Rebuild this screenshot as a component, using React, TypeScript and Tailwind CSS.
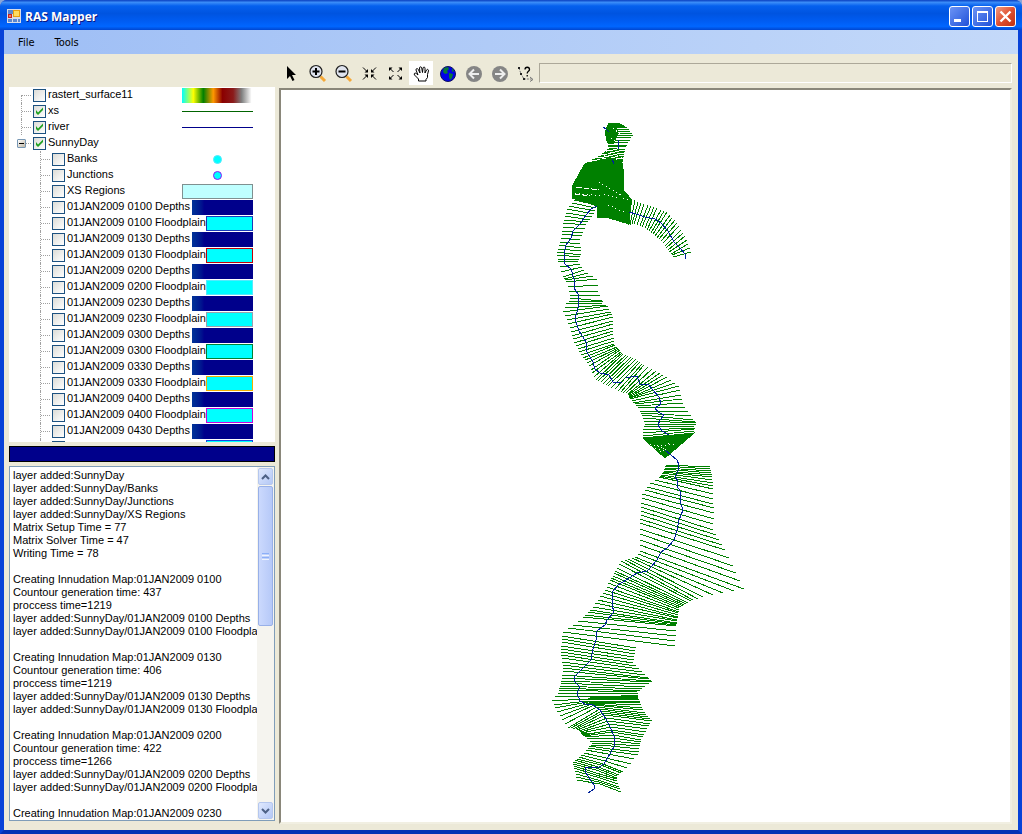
import React from "react";

type Layer = { name: string; kind: "line" | "dot" | "area" | "depth" | "flood"; style: string };

const floodBorders = [
  "border-blue-800",
  "border-red-700",
  "border-cyan-300",
  "border-gray-400",
  "border-green-700",
  "border-yellow-500",
  "border-fuchsia-600",
  "border-blue-700",
];
const times = ["0100", "0130", "0200", "0230", "0300", "0330", "0400", "0430"];

const sunnyDay: Layer[] = [
  { name: "Banks", kind: "dot", style: "border-cyan-300" },
  { name: "Junctions", kind: "dot", style: "border-purple-600" },
  { name: "XS Regions", kind: "area", style: "" },
];
times.forEach((t, i) => {
  sunnyDay.push({ name: `01JAN2009 ${t} Depths`, kind: "depth", style: "" });
  sunnyDay.push({ name: `01JAN2009 ${t} Floodplain`, kind: "flood", style: floodBorders[i] });
});

const runs = [
  ["0100", "437", "1219"],
  ["0130", "406", "1219"],
  ["0200", "422", "1266"],
];

const log = [
  "layer added:SunnyDay",
  "layer added:SunnyDay/Banks",
  "layer added:SunnyDay/Junctions",
  "layer added:SunnyDay/XS Regions",
  "Matrix Setup Time = 77",
  "Matrix Solver Time = 47",
  "Writing Time = 78",
  "",
  ...runs.flatMap(([t, gen, total]) => [
    `Creating Innudation Map:01JAN2009 ${t}`,
    `Countour generation time: ${gen}`,
    `proccess time=${total}`,
    `layer added:SunnyDay/01JAN2009 ${t} Depths`,
    `layer added:SunnyDay/01JAN2009 ${t} Floodplain`,
    "",
  ]),
  "Creating Innudation Map:01JAN2009 0230",
].join("\n");

// each row: number of cuts up to this one, then the x/y points of the cut
type Cut = number[];

const head: Cut[] = [
  [0, 609, 123, 620, 123],
  [4, 606, 128, 627, 127],
  [4, 605, 136, 633, 135],
  [3, 607, 143, 628, 142],
  [3, 609, 148, 625, 150],
  [6, 598, 156, 623, 160],
  [5, 584, 164, 622, 166],
];

const leftArm: Cut[] = [
  [0, 574, 200, 597, 205],
  [3, 567, 209, 594, 214],
  [4, 563, 223, 586, 225],
  [4, 561, 238, 580, 240],
  [4, 557, 252, 581, 255],
  [3, 558, 262, 578, 261],
  [3, 563, 277, 584, 270],
  [3, 566, 282, 597, 279],
  [2, 569, 291, 598, 291],
  [2, 570, 298, 602, 301],
  [2, 566, 304, 603, 303],
  [2, 563, 312, 608, 306],
  [4, 570, 328, 613, 317],
  [4, 574, 343, 613, 331],
  [4, 581, 355, 614, 344],
  [3, 587, 363, 618, 348],
  [5, 596, 380, 623, 354],
  [5, 608, 386, 636, 359],
  [4, 621, 392, 644, 365],
  [3, 628, 394, 656, 371],
  [3, 629, 397, 667, 377],
  [3, 630, 399, 679, 386],
  [4, 636, 406, 683, 403],
  [4, 642, 415, 693, 420],
  [2, 644, 421, 696, 423],
  [5, 643, 436, 694, 431],
];

const rightArm: Cut[] = [
  [0, 632, 199, 628, 225],
  [3, 641, 203, 634, 224],
  [4, 654, 207, 645, 228],
  [4, 667, 212, 653, 234],
  [4, 677, 223, 661, 241],
  [4, 685, 236, 668, 250],
  [4, 691, 252, 673, 257],
];

const lower: Cut[] = [
  [0, 666, 465, 710, 467],
  [5, 663, 472, 712, 477],
  [4, 659, 477, 713, 489],
  [2, 650, 483, 713, 499],
  [3, 642, 494, 714, 513],
  [3, 641, 507, 713, 530],
  [4, 640, 523, 725, 550],
  [5, 640, 551, 744, 589],
  [2, 635, 557, 723, 593],
  [2, 628, 559, 703, 597],
  [2, 621, 561, 693, 600],
  [3, 615, 571, 686, 604],
  [4, 610, 580, 679, 608],
  [4, 603, 593, 678, 615],
  [5, 590, 610, 677, 623],
  [3, 583, 617, 676, 626],
  [4, 563, 632, 675, 646],
  [1, 562, 636, 636, 648],
  [5, 561, 652, 633, 663],
  [5, 563, 668, 648, 678],
  [3, 562, 678, 652, 682],
  [3, 560, 686, 642, 689],
  [2, 558, 690, 637, 692],
  [2, 555, 696, 638, 696],
];

// cuts that bend where they meet the river
const bent: Cut[] = [
  [0, 552, 701, 585, 699, 639, 699],
  [2, 555, 708, 588, 702, 640, 703],
  [3, 562, 720, 594, 705, 643, 710],
  [2, 568, 728, 600, 709, 646, 715],
  [3, 576, 729, 605, 715, 652, 721],
  [3, 580, 732, 610, 724, 647, 729],
  [4, 585, 737, 613, 735, 641, 740],
  [3, 592, 743, 612, 744, 640, 746],
  [3, 588, 748, 609, 751, 638, 755],
  [4, 579, 757, 603, 764, 623, 772],
  [3, 573, 762, 596, 768, 617, 776],
  [3, 574, 768, 596, 775, 617, 781],
  [4, 577, 780, 600, 784, 621, 792],
];

function cutsPath(cuts: Cut[]) {
  const line = (points: number[]) =>
    "M" +
    points
      .map((p) => Math.round(p))
      .join(" ");
  let d = "";
  for (let i = 1; i < cuts.length; i++) {
    const [, ...a] = cuts[i - 1];
    const [count, ...b] = cuts[i];
    for (let k = 0; k < count; k++) {
      d += line(a.map((v, j) => v + ((b[j] - v) * k) / count));
    }
  }
  return d + line(cuts[cuts.length - 1].slice(1));
}

const RiverMap = () => (
  <svg className="block h-full w-full" shapeRendering="crispEdges" role="img" aria-label="River map">
    <g transform="translate(-281 -90)" fill="none" stroke="#008000">
      <path
        fill="#008000"
        d="M585 164L598 160L611 158L622 163L624 175L623 190L631 199L629 224L609 218L597 217L597 206L572 198L573 185L579 174Z"
      />
      <path fill="#008000" d="M609 123H618L616 128L618 133L613 144L608 143L605 133Z" />
      <path d={cutsPath(head)} />
      <path d={cutsPath(leftArm)} />
      <path d={cutsPath(rightArm)} />
      <path d={cutsPath(lower)} />
      <path d={cutsPath(bent)} />
      <path fill="#008000" d="M643 438L694 433L665 458Z" />
      <path fill="#008000" d="M590 698L637 695L638 699L588 699Z" />
      <path fill="#008000" d="M581 733L586 732L591 736L586 737Z" />
      <path
        stroke="#ffffff"
        strokeDasharray="1 3"
        d="M613 128L629 142M611 138L625 146M606 151L623 158M600 155L620 159M576 187L597 190M575 193L600 196M599 182L622 196M604 194L628 200M608 205L626 213M650 444L668 450M655 448L670 452M660 452L671 441M657 446L675 444"
      />
      <path stroke="#ffffff" strokeDasharray="5 2" d="M577 187L599 190M575 194L590 196M588 162L606 158" />
      <g stroke="#00209a">
        <path d="M603 127L606 129L609 132M618 140V149M612 159L614 164" />
        <path d="M629 212L636 214L645 217L655 219L661 223L668 231L674 242L680 248L685 254L686 259" />
        <path d="M597 206L591 209L586 215L580 224L573 231L571 238L566 245L564 253L565 264L571 269L574 279L574 288L578 294L578 308L575 319L579 331L586 342L587 352L593 362L595 369L600 373L609 375L613 382L622 382M626 378L637 376L640 384L648 384L653 390L659 397L661 404L655 408L658 412L664 415L660 420L658 425L662 431L669 435" />
        <path d="M665 450L671 455L677 460L679 465L678 471L675 477L678 481L677 486L680 491L680 501L683 510L679 520L677 530L674 540L667 548L661 552L657 560L651 567L647 571L637 573L626 580L618 585L613 591L612 605L614 612L607 620L605 625L597 631L596 640L593 649L591 660L587 664L581 670L575 676L574 681L580 687L577 693L580 701L587 705L592 704L600 710L606 719L610 727L614 736L615 745L610 754L604 764L599 767H586L585 771L589 778L594 785L594 789L588 793" />
      </g>
    </g>
  </svg>
);

const TreeCheck = ({ id, checked }: { id: string; checked?: boolean }) => (
  <span className="mt-0.5 ml-0.5 grid size-[13px] flex-none">
    <input
      id={id}
      type="checkbox"
      defaultChecked={checked}
      className="peer col-start-1 row-start-1 size-[13px] appearance-none border border-[#1c5180] bg-linear-to-br from-[#dcdcd7] to-white"
    />
    <svg
      viewBox="0 0 13 13"
      className="pointer-events-none invisible col-start-1 row-start-1 size-[13px] peer-checked:visible"
    >
      <path d="M3 5v3l2 2 5-5V2.500L5 7.500z" fill="#21a121" />
    </svg>
  </span>
);

const Swatch = ({ layer }: { layer: Layer }) => {
  switch (layer.kind) {
    case "depth":
      return <span className="h-[15px] w-[61px] bg-linear-to-r from-[#003399] via-[#00008b] via-20% to-[#00008b]" />;
    case "flood":
      return <span className={`h-[15px] w-[47px] border bg-[#00ffff] ${layer.style}`} />;
    case "area":
      return <span className="h-[15px] w-[71px] border border-[#7f9090] bg-[#bfffff]" />;
    case "dot":
      return (
        <span className="flex h-[15px] w-[71px] items-center justify-center">
          <span className={`size-[9px] rounded-full border bg-[#00ffff] ${layer.style}`} />
        </span>
      );
    default:
      return (
        <span className="flex h-[15px] w-[71px] items-center">
          <span className={`h-px w-full ${layer.style}`} />
        </span>
      );
  }
};

const Guide = () => (
  <span className="h-4 w-[10px] flex-none border-l border-dotted border-[#a0a0a0]">
    <span className="block h-[9px] border-b border-dotted border-[#a0a0a0]" />
  </span>
);

const rowClass = "flex h-4 items-start pr-[22px]";
const labelClass = "ml-0.5 flex-1 leading-[14px] whitespace-nowrap min-w-0";

const LayerTree = () => (
  <ul className="min-h-0 flex-1 overflow-hidden bg-white" aria-label="Layers">
    <li className={`${rowClass} pl-3`}>
      <span className="mt-2 h-2 w-[10px] flex-none border-t border-l border-dotted border-[#a0a0a0]" />
      <TreeCheck id="raster" />
      <label htmlFor="raster" className={labelClass}>rastert_surface11</label>
      <span className="mt-px h-[15px] w-[71px] bg-[linear-gradient(to_right,#00ffff,#ffff00_16%,#008000_30%,#ff9900_44%,#8b0000_57%,#8b1a1a_72%,#808080_84%,#ffffff_98%)]" />
    </li>
    <li className={`${rowClass} pl-3`}>
      <Guide />
      <TreeCheck id="xs" checked />
      <label htmlFor="xs" className={labelClass}>xs</label>
      <span className="mt-px flex-none">
        <Swatch layer={{ name: "xs", kind: "line", style: "bg-[#006400]" }} />
      </span>
    </li>
    <li className={`${rowClass} pl-3`}>
      <Guide />
      <TreeCheck id="river" checked />
      <label htmlFor="river" className={labelClass}>river</label>
      <span className="mt-px flex-none">
        <Swatch layer={{ name: "river", kind: "line", style: "bg-[#00008b]" }} />
      </span>
    </li>
    <li>
      <div className={`${rowClass} pl-2`}>
        <button
          aria-label="Collapse SunnyDay"
          className="mt-1 flex size-[9px] flex-none items-center justify-center rounded-[1px] border border-[#7898b5] bg-linear-to-br from-white to-[#c0b7a6]"
        >
          <span className="h-px w-[5px] bg-black" />
        </button>
        <span className="h-[9px] w-[5px] flex-none border-b border-dotted border-[#a0a0a0]" />
        <TreeCheck id="sunnyday" checked />
        <label htmlFor="sunnyday" className={labelClass}>SunnyDay</label>
      </div>
      <ul>
        {sunnyDay.map((layer, i) => (
          <li key={layer.name} className={`${rowClass} pl-[31px]`}>
            <Guide />
            <TreeCheck id={`layer-${i}`} />
            <label htmlFor={`layer-${i}`} className={labelClass}>{layer.name}</label>
            <span className="mt-px flex flex-none">
              <Swatch layer={layer} />
            </span>
          </li>
        ))}
      </ul>
    </li>
  </ul>
);

const scrollButton =
  "flex h-[17px] w-[15px] flex-none items-center justify-center rounded-[2px] border border-[#b5c7ee] bg-linear-to-br from-[#dfe8fd] to-[#b4c8f6]";

const LogPanel = () => (
  <div className="min-h-0 flex-1">
    <div className="flex h-full border border-[#7f9db9] bg-white">
      <textarea
        readOnly
        wrap="off"
        aria-label="Messages"
        value={log}
        className="min-w-0 flex-1 resize-none overflow-hidden pt-0.5 pl-[3px] leading-[13px] whitespace-pre outline-none"
      />
      <div className="flex w-[17px] flex-none flex-col items-center bg-[#f5f4ef] py-px">
        <button aria-label="Scroll up" className={scrollButton}>
          <svg viewBox="0 0 9 6" className="h-1.5 w-[9px]" fill="none" stroke="#4d6185" strokeWidth="2">
            <path d="M1 5l3.500-3.500L8 5" />
          </svg>
        </button>
        <div className="mt-px flex h-[140px] w-[15px] flex-none flex-col items-center justify-center gap-px rounded-[2px] border border-[#98b0e8] bg-linear-to-r from-[#cbd9fd] to-[#b6c9f8]">
          <span className="h-px w-[7px] bg-[#8cb0f8]" />
          <span className="h-px w-[7px] bg-[#eef4fe]" />
          <span className="h-px w-[7px] bg-[#8cb0f8]" />
          <span className="h-px w-[7px] bg-[#eef4fe]" />
        </div>
        <span className="flex-1" />
        <button aria-label="Scroll down" className={scrollButton}>
          <svg viewBox="0 0 9 6" className="h-1.5 w-[9px]" fill="none" stroke="#4d6185" strokeWidth="2">
            <path d="M1 1l3.500 3.500L8 1" />
          </svg>
        </button>
      </div>
    </div>
  </div>
);

const Magnifier = ({ plus }: { plus?: boolean }) => (
  <>
    <path d="M12.500 12.500L17 17" stroke="#f5a838" strokeWidth="3" />
    <circle cx="8" cy="7.500" r="6" fill="#dfe3ee" stroke="#202020" strokeWidth="1.200" />
    <path d={plus ? "M4.500 7.500h7M8 4v7" : "M4.500 7.500h7"} stroke="#000" strokeWidth="2" />
  </>
);

const tools: { label: string; icon: React.ReactNode }[] = [
  { label: "Select", icon: <path d="M5 2v13l3-3 2.500 5 2-1-2.500-5h4z" fill="#000" /> },
  { label: "Zoom in", icon: <Magnifier plus /> },
  { label: "Zoom out", icon: <Magnifier /> },
  {
    label: "Zoom to selection",
    icon: (
      <>
        <path d="M3 3.500l4 4M16 3.500l-4 4M3 15.500l4-4M16 15.500l-4-4" stroke="#000" />
        <path d="M8 5v3.500H4.500zM11 5v3.500h3.500zM8 14v-3.500H4.500zM11 14v-3.500h3.500z" fill="#000" />
      </>
    ),
  },
  {
    label: "Full extent",
    icon: (
      <>
        <path d="M4 4.500l3.500 3.500M15 4.500l-3.500 3.500M4 14.500l3.500-3.500M15 14.500l-3.500-3.500" stroke="#000" />
        <path d="M3 7V3.500h3.500zM16 7V3.500h-3.500zM3 12v3.500h3.500zM16 12v3.500h-3.500z" fill="#000" />
      </>
    ),
  },
  {
    label: "Pan",
    icon: (
      <path
        d="M6.500 17V15L2.500 11C1.500 9.500 3 8.500 4.300 9.500L6 11L4 6C3.800 4.500 5.500 4 6.200 5.300L8 9L7.500 4C7.500 2.600 9.300 2.400 9.700 3.800L10.500 8.500L11 4C11.300 2.700 13 2.800 13 4.200L13 9L14.500 6C15.200 4.800 16.800 5.500 16.500 6.800L15.500 10.500V13.500L14 15.500V17Z"
        fill="#fff"
        stroke="#000"
      />
    ),
  },
  {
    label: "World",
    icon: (
      <>
        <circle cx="10" cy="10" r="7.500" fill="#0000e8" stroke="#101060" />
        <path d="M6 4l4-1 1 2-2 2 1 2-3 1-2-2zM11 9l4 1-1 4-2 2-1-3zM14 4l2 3-2 1z" fill="#087838" />
      </>
    ),
  },
  {
    label: "Back",
    icon: (
      <>
        <circle cx="10" cy="10" r="8" fill="#858585" />
        <path d="M15 10H6M10 5.500L5.500 10L10 14.500" stroke="#eee" strokeWidth="2" />
      </>
    ),
  },
  {
    label: "Forward",
    icon: (
      <>
        <circle cx="10" cy="10" r="8" fill="#858585" />
        <path d="M5 10h9M10 5.500L14.500 10L10 14.500" stroke="#eee" strokeWidth="2" />
      </>
    ),
  },
  {
    label: "Measure",
    icon: (
      <>
        <path d="M3 4l2 6 3 5h8" stroke="#777" strokeDasharray="2 1" />
        <path d="M2 3h2v2H2zM4 9h2v2H4zM7 14h2v2H7z" fill="#222" />
        <path d="M14 13l3 2.500-3 2" stroke="#777" />
        <path d="M9 5.500C9 2.500 13.500 2.500 13.500 5.500C13.500 7.500 11.200 7 11.200 9.500M11.200 11v1.500" stroke="#000" strokeWidth="1.300" />
      </>
    ),
  },
];

const Toolbar = () => (
  <div className="flex h-[34px] flex-none items-center gap-0.5 pt-1">
    {tools.map((tool) => (
      <button
        key={tool.label}
        aria-label={tool.label}
        className={`flex size-6 flex-none items-center justify-center ${tool.label === "Pan" ? "bg-white" : ""}`}
      >
        <svg viewBox="0 0 18 18" className="size-[18px] overflow-visible" fill="none">
          {tool.icon}
        </svg>
      </button>
    ))}
    <div className="h-5 flex-1 border border-t-[#aca899] border-r-white border-b-white border-l-[#aca899]" />
  </div>
);

const captionButton =
  "flex size-[21px] items-center justify-center rounded-[3px] border border-white bg-linear-to-br";

const TitleBar = () => (
  <header className="flex h-[30px] flex-none items-center bg-[linear-gradient(to_bottom,#0a3fc0,#3a8cf8_8%,#0560ee_20%,#0054e0_45%,#005cf2_70%,#0066ff_88%,#0046d0)] pt-0.5 pr-[6px] pl-[7px]">
    <svg viewBox="0 0 14 14" className="size-[14px]" shapeRendering="crispEdges">
      <path d="M0 0h14v14H0z" fill="#d8dce8" />
      <path d="M1 1h5v4H1zM1 10h4v3H1zM6 10h4v3H6zM11 10h2v3h-2z" fill="#5b87d0" />
      <path d="M1 5h4v4H1z" fill="#c82020" />
      <path d="M2 6h2v2H2z" fill="#f08060" />
      <path d="M6 1h7v7H6z" fill="#e8a010" />
      <path d="M7 2h5v5H7z" fill="#ffdc60" />
    </svg>
    <h1 className="ml-1 flex-1 pt-0.5 font-['Open_Sans',sans-serif] text-[12px] leading-4 font-bold text-white [text-shadow:1px_1px_#0a1883]">
      RAS Mapper
    </h1>
    <div className="flex gap-0.5">
      <button aria-label="Minimize" className={`${captionButton} from-[#6c93f5] to-[#2150d8]`}>
        <svg viewBox="0 0 19 19" className="size-[19px]">
          <path d="M4 12h7v3H4z" fill="#fff" />
        </svg>
      </button>
      <button aria-label="Maximize" className={`${captionButton} from-[#6c93f5] to-[#2150d8]`}>
        <svg viewBox="0 0 19 19" className="size-[19px]" shapeRendering="crispEdges">
          <path d="M4 4h11v11H4zM5 6v8h9V6z" fill="#fff" fillRule="evenodd" />
        </svg>
      </button>
      <button aria-label="Close" className={`${captionButton} from-[#f09a80] via-[#e05030] to-[#c03010]`}>
        <svg viewBox="0 0 19 19" className="size-[19px]">
          <path d="M4.500 4.500l10 10M14.500 4.500l-10 10" stroke="#fff" strokeWidth="2.400" />
        </svg>
      </button>
    </div>
  </header>
);

export default function App() {
  return (
    <div className="h-screen bg-[#8aa6d8]">
      <div className="flex h-full flex-col overflow-hidden rounded-t-[7px] bg-[#0a48dc] font-['Liberation_Sans',Arial,sans-serif] text-[11px] text-black">
        <TitleBar />
        <div className="flex min-h-0 flex-1 flex-col border-x-4 border-b-4 border-[#0842d8] border-b-[#0431b4] bg-[#ece9d8]">
          <nav className="flex h-6 flex-none items-center bg-linear-to-r from-[#9ebef5] to-[#c4d9f9] pt-0.5 pl-2 font-['DejaVu_Sans_Condensed','DejaVu_Sans',sans-serif]">
            <button className="px-1.5">File</button>
            <button className="ml-2 px-1.5">Tools</button>
          </nav>
          <main className="flex min-h-0 flex-1 pr-[6px] pb-[6px] pl-[5px]">
            <aside className="flex w-[266px] flex-none flex-col gap-1 pt-[33px] pb-[3px]">
              <LayerTree />
              <div className="h-4 flex-none border border-black bg-[#00008b]" />
              <LogPanel />
            </aside>
            <section className="ml-1 flex min-w-0 flex-1 flex-col">
              <Toolbar />
              <div className="min-h-0 flex-1 border-2 border-t-[#8a877a] border-r-[#f1efe2] border-b-[#f1efe2] border-l-[#8a877a] bg-white">
                <RiverMap />
              </div>
            </section>
          </main>
        </div>
      </div>
    </div>
  );
}
